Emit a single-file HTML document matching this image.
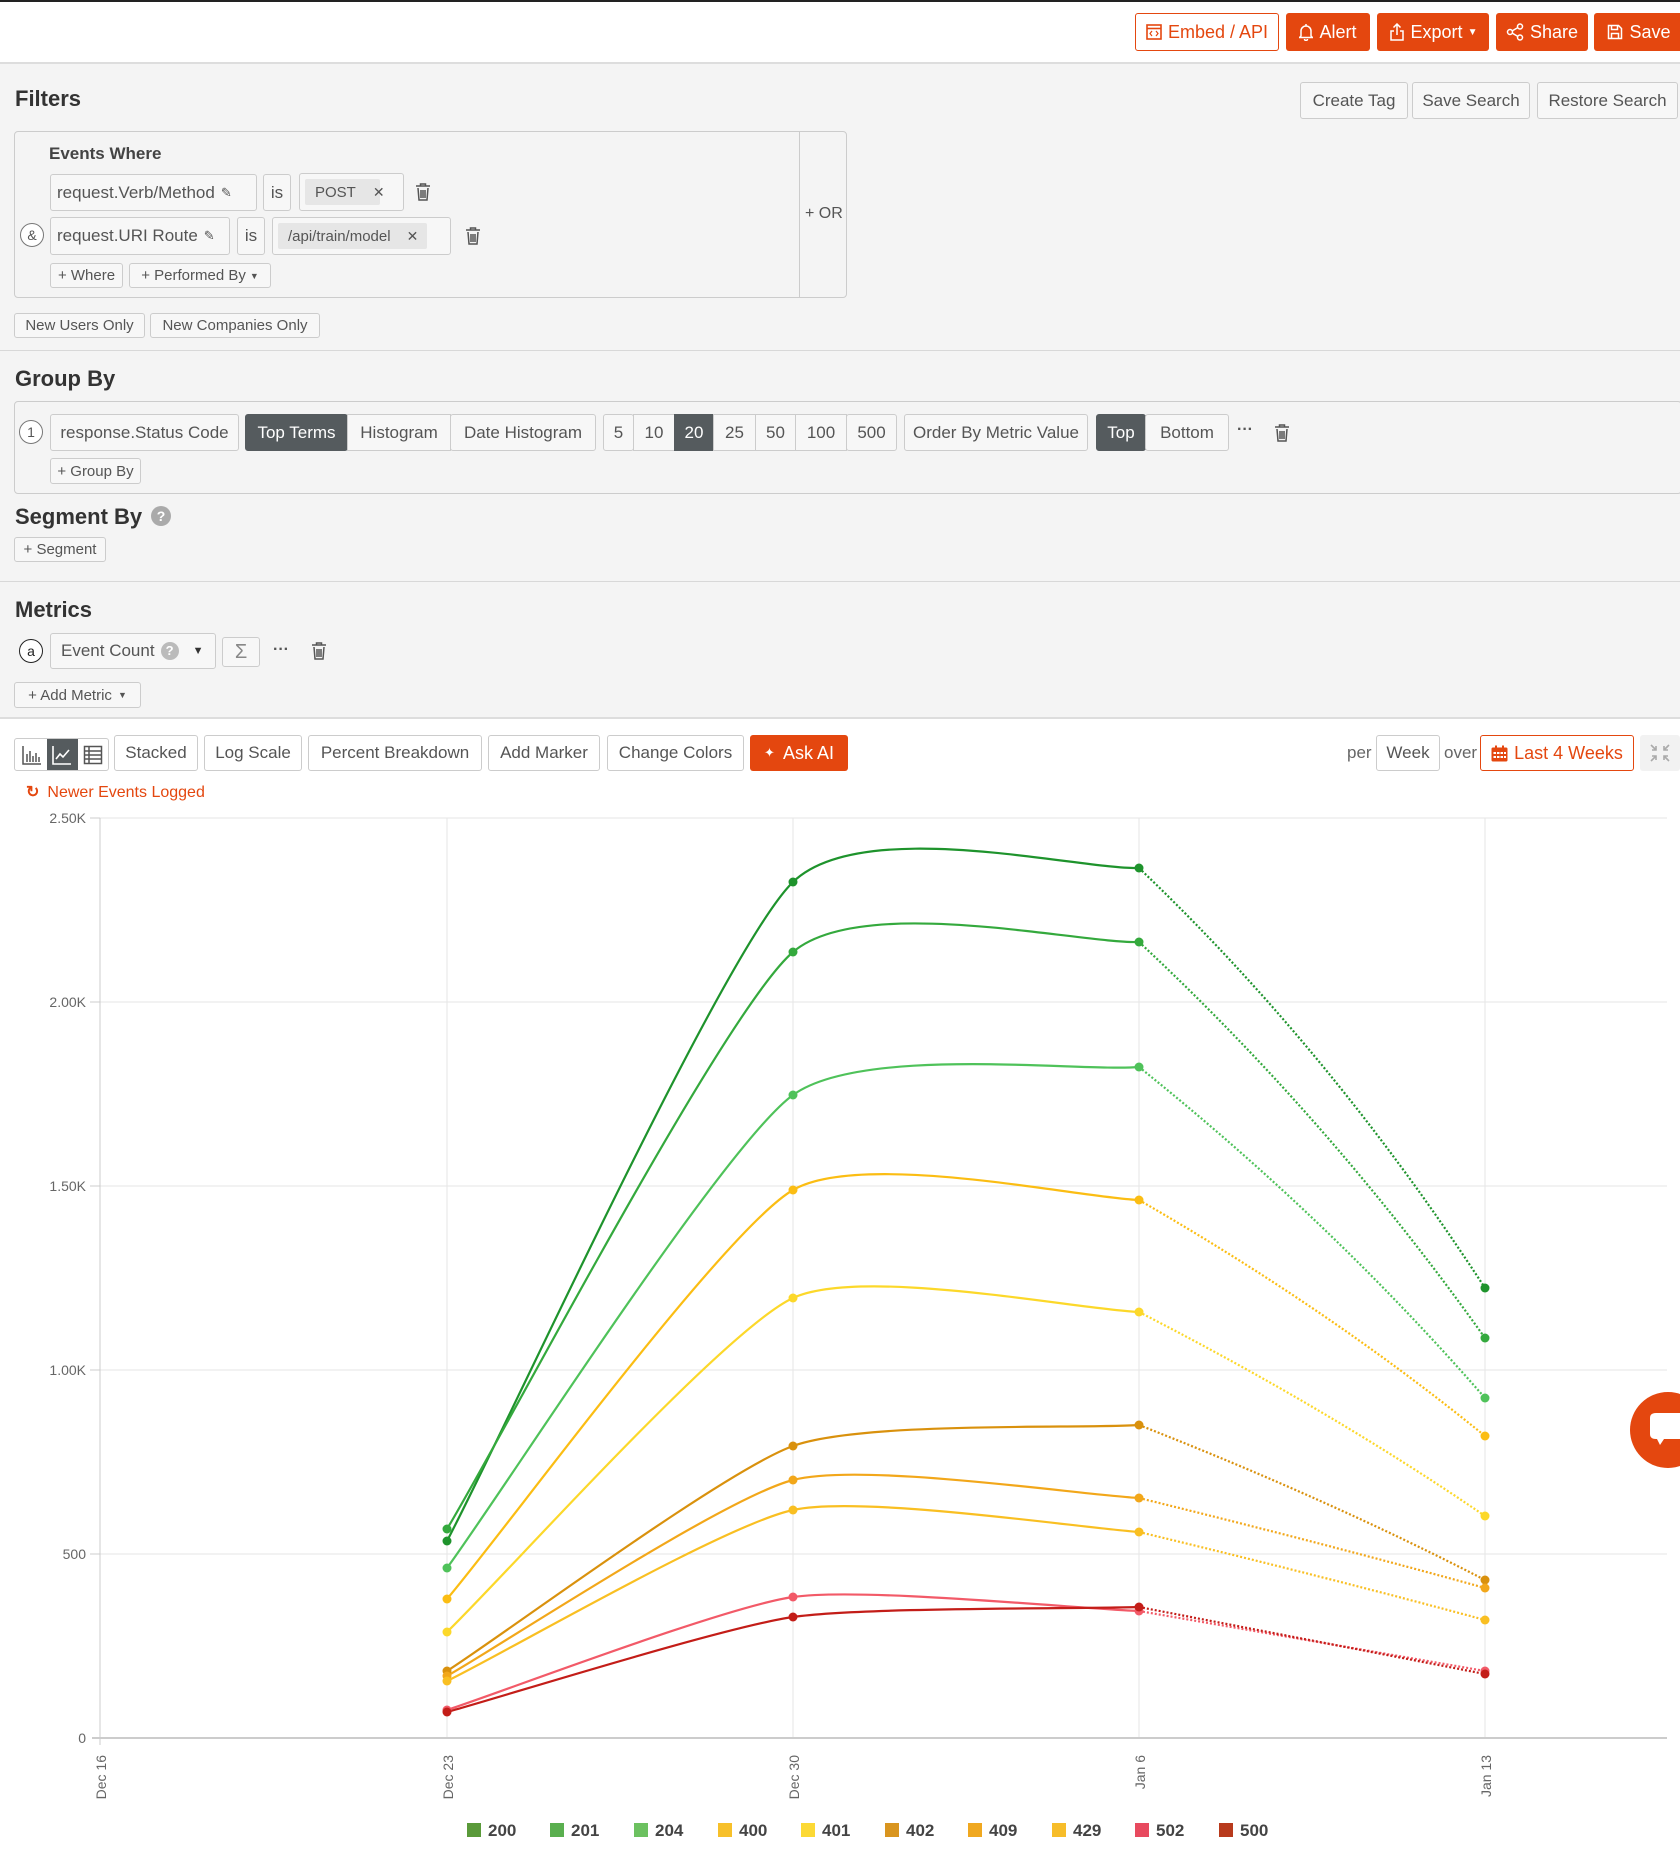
<!DOCTYPE html>
<html><head><meta charset="utf-8">
<style>
*{box-sizing:border-box;margin:0;padding:0}
body{width:1680px;height:1872px;position:relative;background:#fff;font-family:"Liberation Sans",Arial,sans-serif;color:#555;overflow:hidden;font-size:17px}
.a{position:absolute}
.b{position:absolute;border:1px solid #ccc;border-radius:3px;background:#f7f7f7;display:flex;align-items:center;justify-content:center;color:#555;white-space:nowrap}
.w{background:#fff}
.o{position:absolute;background:#e4470f;color:#fff;border-radius:3px;display:flex;align-items:center;justify-content:center;white-space:nowrap;font-size:18px}
.d{background:#555b5e!important;color:#fff!important;border-color:#555b5e!important}
.h{position:absolute;font-weight:bold;font-size:22px;color:#333}
.tag{position:absolute;background:#e6e6e6;border-radius:2px;display:flex;align-items:center;padding-left:10px;font-size:15px;color:#555}
.c{position:absolute;border:1px solid #777;border-radius:50%;width:24px;height:24px;display:flex;align-items:center;justify-content:center;font-size:14px;background:#fff}
.hr{position:absolute;left:0;width:1680px;height:2px;background:#ddd}
</style></head><body>
<div class="a" style="left:0;top:0;width:1680px;height:2px;background:#222"></div>
<div class="hr" style="top:62px"></div>
<div class="a" style="left:0;top:64px;width:1680px;height:654px;background:#f4f4f4"></div>
<div class="hr" style="top:717px"></div>

<!-- top buttons -->
<div class="b w" style="left:1135px;top:13px;width:144px;height:38px;border-color:#e4470f;color:#e4470f;font-size:18px">
<svg width="16" height="16" viewBox="0 0 16 16" style="margin-right:6px"><rect x="1" y="1" width="14" height="14" fill="none" stroke="#e4470f" stroke-width="1.6"/><line x1="1" y1="4.5" x2="15" y2="4.5" stroke="#e4470f" stroke-width="1.6"/><path d="M6 7l-2 2.5 2 2.5M10 7l2 2.5-2 2.5" stroke="#e4470f" fill="none" stroke-width="1.2"/></svg>Embed / API</div>
<div class="o" style="left:1286px;top:13px;width:84px;height:38px"><svg width="14" height="18" viewBox="0 0 14 18" style="margin-right:6px"><path d="M7 1v2M2 13V8a5 5 0 0 1 10 0v5l1.5 1.5h-13z M5.5 16a1.5 1.5 0 0 0 3 0" fill="none" stroke="#fff" stroke-width="1.5"/></svg>Alert</div>
<div class="o" style="left:1377px;top:13px;width:112px;height:38px"><svg width="16" height="18" viewBox="0 0 16 18" style="margin-right:6px"><path d="M8 1v11M4.5 4.5 8 1l3.5 3.5M5 8H2v9h12V8h-3" fill="none" stroke="#fff" stroke-width="1.5"/></svg>Export <span style="font-size:10px;margin-left:5px">&#9660;</span></div>
<div class="o" style="left:1496px;top:13px;width:92px;height:38px"><svg width="18" height="18" viewBox="0 0 18 18" style="margin-right:6px"><circle cx="4" cy="9" r="2.5" fill="none" stroke="#fff" stroke-width="1.5"/><circle cx="14" cy="3.5" r="2.5" fill="none" stroke="#fff" stroke-width="1.5"/><circle cx="14" cy="14.5" r="2.5" fill="none" stroke="#fff" stroke-width="1.5"/><path d="M6 8l6-3.5M6 10l6 3.5" stroke="#fff" stroke-width="1.5"/></svg>Share</div>
<div class="o" style="left:1594px;top:13px;width:90px;height:38px"><svg width="16" height="16" viewBox="0 0 16 16" style="margin-right:6px"><path d="M1.5 1.5h10l3 3v10h-13z M4.5 1.5v4h6v-4 M4.5 14.5v-5h7v5" fill="none" stroke="#fff" stroke-width="1.5"/></svg>Save</div>

<!-- Filters -->
<div class="h" style="left:15px;top:86px">Filters</div>
<div class="b" style="left:1300px;top:82px;width:108px;height:37px">Create Tag</div>
<div class="b" style="left:1412px;top:82px;width:118px;height:37px">Save Search</div>
<div class="b" style="left:1537px;top:82px;width:141px;height:37px">Restore Search</div>

<div class="a" style="left:14px;top:131px;width:833px;height:167px;border:1px solid #ccc;border-radius:4px"></div>
<div class="a" style="left:799px;top:131px;width:1px;height:167px;background:#ccc"></div>
<div class="a" style="left:805px;top:205px;font-size:16px">+ OR</div>
<div class="a" style="left:49px;top:144px;font-weight:bold;font-size:17px;color:#444">Events Where</div>

<div class="b" style="left:50px;top:174px;width:207px;height:37px;justify-content:flex-start;padding-left:6px">request.Verb/Method <span style="font-size:13px;margin-left:6px">&#9998;</span></div>
<div class="b" style="left:263px;top:174px;width:28px;height:37px">is</div>
<div class="b" style="left:299px;top:173px;width:105px;height:38px"></div>
<div class="tag" style="left:305px;top:179px;width:75px;height:26px">POST <span style="margin-left:17px;font-size:14px">&#x2715;</span></div>
<svg class="a" style="left:415px;top:183px" width="16" height="18" viewBox="0 0 16 18"><path d="M1 3h14M5.5 3V1h5v2M3 5l1 12h8l1-12M6 7v8M8 7v8M10 7v8" fill="none" stroke="#555" stroke-width="1.5"/></svg>

<div class="c" style="left:20px;top:223px">&amp;</div>
<div class="b" style="left:50px;top:217px;width:180px;height:38px;justify-content:flex-start;padding-left:6px">request.URI Route <span style="font-size:13px;margin-left:6px">&#9998;</span></div>
<div class="b" style="left:237px;top:217px;width:28px;height:38px">is</div>
<div class="b" style="left:272px;top:217px;width:179px;height:38px"></div>
<div class="tag" style="left:278px;top:223px;width:149px;height:26px">/api/train/model <span style="margin-left:16px;font-size:14px">&#x2715;</span></div>
<svg class="a" style="left:465px;top:227px" width="16" height="18" viewBox="0 0 16 18"><path d="M1 3h14M5.5 3V1h5v2M3 5l1 12h8l1-12M6 7v8M8 7v8M10 7v8" fill="none" stroke="#555" stroke-width="1.5"/></svg>

<div class="b" style="left:50px;top:263px;width:73px;height:25px;font-size:15px">+ Where</div>
<div class="b" style="left:129px;top:263px;width:142px;height:25px;font-size:15px">+ Performed By <span style="font-size:9px;margin-left:4px">&#9660;</span></div>

<div class="b" style="left:14px;top:313px;width:131px;height:25px;font-size:15px">New Users Only</div>
<div class="b" style="left:150px;top:313px;width:170px;height:25px;font-size:15px">New Companies Only</div>
<div class="hr" style="top:350px;height:1px;background:#d8d8d8"></div>

<!-- Group By -->
<div class="h" style="left:15px;top:366px">Group By</div>
<div class="a" style="left:14px;top:401px;width:1668px;height:93px;border:1px solid #ccc;border-radius:4px"></div>
<div class="c" style="left:19px;top:420px">1</div>
<div class="b" style="left:50px;top:414px;width:189px;height:37px">response.Status Code</div>
<div class="b d" style="left:245px;top:414px;width:103px;height:37px">Top Terms</div>
<div class="b" style="left:347px;top:414px;width:104px;height:37px;border-radius:0">Histogram</div>
<div class="b" style="left:450px;top:414px;width:146px;height:37px">Date Histogram</div>
<div class="b" style="left:603px;top:414px;width:31px;height:37px">5</div>
<div class="b" style="left:633px;top:414px;width:42px;height:37px;border-radius:0">10</div>
<div class="b d" style="left:674px;top:414px;width:40px;height:37px;border-radius:0">20</div>
<div class="b" style="left:713px;top:414px;width:43px;height:37px;border-radius:0">25</div>
<div class="b" style="left:755px;top:414px;width:41px;height:37px;border-radius:0">50</div>
<div class="b" style="left:795px;top:414px;width:52px;height:37px;border-radius:0">100</div>
<div class="b" style="left:846px;top:414px;width:51px;height:37px">500</div>
<div class="b" style="left:904px;top:414px;width:184px;height:37px">Order By Metric Value</div>
<div class="b d" style="left:1096px;top:414px;width:50px;height:37px">Top</div>
<div class="b" style="left:1145px;top:414px;width:84px;height:37px">Bottom</div>
<div class="a" style="left:1237px;top:421px;font-size:16px;font-weight:bold">&middot;&middot;&middot;</div>
<svg class="a" style="left:1274px;top:424px" width="16" height="18" viewBox="0 0 16 18"><path d="M1 3h14M5.5 3V1h5v2M3 5l1 12h8l1-12M6 7v8M8 7v8M10 7v8" fill="none" stroke="#555" stroke-width="1.5"/></svg>
<div class="b" style="left:50px;top:458px;width:91px;height:26px;font-size:15px">+ Group By</div>

<!-- Segment -->
<div class="h" style="left:15px;top:504px">Segment By</div>
<div class="a" style="left:151px;top:506px;width:20px;height:20px;border-radius:50%;background:#aaa;color:#fff;font-size:14px;font-weight:bold;text-align:center;line-height:20px">?</div>
<div class="b" style="left:14px;top:537px;width:92px;height:25px;font-size:15px">+ Segment</div>
<div class="hr" style="top:581px;height:1px;background:#d8d8d8"></div>

<!-- Metrics -->
<div class="h" style="left:15px;top:597px">Metrics</div>
<div class="c" style="left:19px;top:639px;border-color:#222;color:#222">a</div>
<div class="b" style="left:50px;top:633px;width:166px;height:36px;justify-content:flex-start;padding-left:10px">Event Count <span style="display:inline-block;width:18px;height:18px;border-radius:50%;background:#bbb;color:#fff;font-size:13px;text-align:center;line-height:18px;margin-left:6px;font-weight:bold">?</span><span style="font-size:11px;margin-left:14px;color:#333">&#9660;</span></div>
<div class="b" style="left:222px;top:637px;width:38px;height:30px;font-size:20px;color:#888">&Sigma;</div>
<div class="a" style="left:273px;top:641px;font-size:16px;font-weight:bold">&middot;&middot;&middot;</div>
<svg class="a" style="left:311px;top:642px" width="16" height="18" viewBox="0 0 16 18"><path d="M1 3h14M5.5 3V1h5v2M3 5l1 12h8l1-12M6 7v8M8 7v8M10 7v8" fill="none" stroke="#555" stroke-width="1.5"/></svg>
<div class="b" style="left:14px;top:682px;width:127px;height:26px;font-size:15px">+ Add Metric <span style="font-size:9px;margin-left:6px">&#9660;</span></div>

<!-- toolbar -->
<div class="b w" style="left:14px;top:738px;width:95px;height:33px"></div>
<svg class="a" style="left:22px;top:745px" width="20" height="20" viewBox="0 0 20 20"><path d="M1 1v18h18M5 17V9M8 17V6M11 17V11M14 17V8M17 17V12" stroke="#555" stroke-width="1.5" fill="none"/></svg>
<div class="a" style="left:47px;top:739px;width:31px;height:31px;background:#555b5e"></div>
<svg class="a" style="left:52px;top:745px" width="20" height="20" viewBox="0 0 20 20"><path d="M1 1v18h18M4 14l4-5 3 3 6-7" stroke="#fff" stroke-width="1.6" fill="none"/></svg>
<svg class="a" style="left:83px;top:745px" width="20" height="20" viewBox="0 0 20 20"><rect x="1.5" y="1.5" width="17" height="17" fill="none" stroke="#555" stroke-width="1.5"/><path d="M1.5 6h17M1.5 10h17M1.5 14h17M6 1.5v17" stroke="#555" stroke-width="1.5"/></svg>
<div class="b w" style="left:114px;top:735px;width:84px;height:36px">Stacked</div>
<div class="b w" style="left:204px;top:735px;width:98px;height:36px">Log Scale</div>
<div class="b w" style="left:308px;top:735px;width:174px;height:36px">Percent Breakdown</div>
<div class="b w" style="left:488px;top:735px;width:112px;height:36px">Add Marker</div>
<div class="b w" style="left:607px;top:735px;width:137px;height:36px">Change Colors</div>
<div class="o" style="left:750px;top:735px;width:98px;height:36px"><span style="font-size:13px;margin-right:8px">&#10022;</span>Ask AI</div>

<div class="a" style="left:1347px;top:743px;color:#666">per</div>
<div class="b w" style="left:1376px;top:735px;width:64px;height:36px">Week</div>
<div class="a" style="left:1444px;top:743px;color:#666">over</div>
<div class="b w" style="left:1480px;top:735px;width:154px;height:36px;border-color:#e4470f;color:#e4470f;font-size:18px">
<svg width="17" height="17" viewBox="0 0 17 17" style="margin-right:6px"><rect x="0.5" y="2.5" width="16" height="14" rx="1.5" fill="#e4470f"/><rect x="4" y="0.5" width="2" height="4" fill="#e4470f"/><rect x="11" y="0.5" width="2" height="4" fill="#e4470f"/><g fill="#fff"><rect x="2.5" y="7" width="2.5" height="2"/><rect x="6" y="7" width="2.5" height="2"/><rect x="9.5" y="7" width="2.5" height="2"/><rect x="13" y="7" width="2" height="2"/><rect x="2.5" y="11" width="2.5" height="2"/><rect x="6" y="11" width="2.5" height="2"/><rect x="9.5" y="11" width="2.5" height="2"/><rect x="13" y="11" width="2" height="2"/></g></svg>Last 4 Weeks</div>
<div class="a" style="left:1640px;top:735px;width:40px;height:36px;background:#f2f2f2;border-radius:3px"></div>
<svg class="a" style="left:1650px;top:744px" width="20" height="18" viewBox="0 0 20 18"><path d="M1 1l5 5M6 2v4H2M19 1l-5 5M14 2v4h4M1 17l5-5M6 16v-4H2M19 17l-5-5M14 16v-4h4" stroke="#aaa" stroke-width="1.6" fill="none"/></svg>

<div class="a" style="left:26px;top:782px;color:#e4470f;font-size:16px"><span style="font-weight:bold;margin-right:8px">&#x21BB;</span>Newer Events Logged</div>

<!-- chart -->
<svg class="a" style="left:0;top:0" width="1680" height="1872">
<g stroke="#e5e5e5" stroke-width="1">
<line x1="100" y1="818" x2="1667" y2="818"/><line x1="100" y1="1002" x2="1667" y2="1002"/><line x1="100" y1="1186" x2="1667" y2="1186"/><line x1="100" y1="1370" x2="1667" y2="1370"/><line x1="100" y1="1554" x2="1667" y2="1554"/>
<line x1="447" y1="818" x2="447" y2="1738"/><line x1="793" y1="818" x2="793" y2="1738"/><line x1="1139" y1="818" x2="1139" y2="1738"/><line x1="1485" y1="818" x2="1485" y2="1738"/>
</g>
<g stroke="#ccc"><line x1="100" y1="818" x2="100" y2="1745"/><line x1="90" y1="818" x2="100" y2="818"/><line x1="90" y1="1002" x2="100" y2="1002"/><line x1="90" y1="1186" x2="100" y2="1186"/><line x1="90" y1="1370" x2="100" y2="1370"/><line x1="90" y1="1554" x2="100" y2="1554"/></g>
<line x1="92" y1="1738" x2="1667" y2="1738" stroke="#ccc" stroke-width="2"/>
<g font-family="Liberation Sans,Arial,sans-serif" font-size="14" fill="#666" text-anchor="end">
<text x="86" y="823">2.50K</text><text x="86" y="1007">2.00K</text><text x="86" y="1191">1.50K</text><text x="86" y="1375">1.00K</text><text x="86" y="1559">500</text><text x="86" y="1743">0</text>
<text transform="translate(106,1755) rotate(-90)">Dec 16</text>
<text transform="translate(453,1755) rotate(-90)">Dec 23</text>
<text transform="translate(799,1755) rotate(-90)">Dec 30</text>
<text transform="translate(1145,1755) rotate(-90)">Jan 6</text>
<text transform="translate(1491,1755) rotate(-90)">Jan 13</text>
</g>
<g fill="none" stroke-width="2.2">
<path stroke="#1e932c" d="M447 1541C505 1431 724 949 793 882C862 815 1081 870 1139 868"/>
<path stroke="#34a93d" d="M447 1529C505 1433 724 1011 793 952C862 893 1081 944 1139 942"/>
<path stroke="#4fc25a" d="M447 1568C505 1489 724 1145 793 1095C862 1045 1081 1072 1139 1067"/>
<path stroke="#fbbd13" d="M447 1599C505 1531 724 1230 793 1190C862 1150 1081 1198 1139 1200"/>
<path stroke="#fcd82a" d="M447 1632C505 1576 724 1330 793 1298C862 1266 1081 1310 1139 1312"/>
<path stroke="#d9910d" d="M447 1671C505 1634 724 1471 793 1446C862 1421 1081 1429 1139 1425"/>
<path stroke="#f2a71a" d="M447 1676C505 1643 724 1498 793 1480C862 1462 1081 1495 1139 1498"/>
<path stroke="#f9bf22" d="M447 1681C505 1653 724 1525 793 1510C862 1495 1081 1528 1139 1532"/>
<path stroke="#f25a68" d="M447 1710C505 1691 724 1607 793 1597C862 1587 1081 1609 1139 1611"/>
<path stroke="#c31d18" d="M447 1712C505 1696 724 1627 793 1617C862 1607 1081 1609 1139 1607"/>
</g>
<g fill="none" stroke-width="2.2" stroke-dasharray="2 2">
<path stroke="#1e932c" d="M1139 868Q1330 1050 1485 1288"/>
<path stroke="#34a93d" d="M1139 942Q1330 1120 1485 1338"/>
<path stroke="#4fc25a" d="M1139 1067Q1330 1220 1485 1398"/>
<path stroke="#fbbd13" d="M1139 1200Q1330 1310 1485 1436"/>
<path stroke="#fcd82a" d="M1139 1312Q1330 1410 1485 1516"/>
<path stroke="#d9910d" d="M1139 1425Q1330 1500 1485 1580"/>
<path stroke="#f2a71a" d="M1139 1498Q1330 1545 1485 1588"/>
<path stroke="#f9bf22" d="M1139 1532Q1330 1578 1485 1620"/>
<path stroke="#f25a68" d="M1139 1611L1485 1671"/>
<path stroke="#c31d18" d="M1139 1607L1485 1674"/>
</g>
<g>
<g fill="#1e932c"><circle cx="447" cy="1541" r="4.5"/><circle cx="793" cy="882" r="4.5"/><circle cx="1139" cy="868" r="4.5"/><circle cx="1485" cy="1288" r="4.5"/></g>
<g fill="#34a93d"><circle cx="447" cy="1529" r="4.5"/><circle cx="793" cy="952" r="4.5"/><circle cx="1139" cy="942" r="4.5"/><circle cx="1485" cy="1338" r="4.5"/></g>
<g fill="#4fc25a"><circle cx="447" cy="1568" r="4.5"/><circle cx="793" cy="1095" r="4.5"/><circle cx="1139" cy="1067" r="4.5"/><circle cx="1485" cy="1398" r="4.5"/></g>
<g fill="#fbbd13"><circle cx="447" cy="1599" r="4.5"/><circle cx="793" cy="1190" r="4.5"/><circle cx="1139" cy="1200" r="4.5"/><circle cx="1485" cy="1436" r="4.5"/></g>
<g fill="#fcd82a"><circle cx="447" cy="1632" r="4.5"/><circle cx="793" cy="1298" r="4.5"/><circle cx="1139" cy="1312" r="4.5"/><circle cx="1485" cy="1516" r="4.5"/></g>
<g fill="#d9910d"><circle cx="447" cy="1671" r="4.5"/><circle cx="793" cy="1446" r="4.5"/><circle cx="1139" cy="1425" r="4.5"/><circle cx="1485" cy="1580" r="4.5"/></g>
<g fill="#f2a71a"><circle cx="447" cy="1676" r="4.5"/><circle cx="793" cy="1480" r="4.5"/><circle cx="1139" cy="1498" r="4.5"/><circle cx="1485" cy="1588" r="4.5"/></g>
<g fill="#f9bf22"><circle cx="447" cy="1681" r="4.5"/><circle cx="793" cy="1510" r="4.5"/><circle cx="1139" cy="1532" r="4.5"/><circle cx="1485" cy="1620" r="4.5"/></g>
<g fill="#f25a68"><circle cx="447" cy="1710" r="4.5"/><circle cx="793" cy="1597" r="4.5"/><circle cx="1139" cy="1611" r="4.5"/><circle cx="1485" cy="1671" r="4.5"/></g>
<g fill="#c31d18"><circle cx="447" cy="1712" r="4.5"/><circle cx="793" cy="1617" r="4.5"/><circle cx="1139" cy="1607" r="4.5"/><circle cx="1485" cy="1674" r="4.5"/></g>
</g>
<g font-family="Liberation Sans,Arial,sans-serif" font-size="17" font-weight="bold" fill="#444">
<rect x="467" y="1823" width="14" height="14" fill="#5a9a3a"/><text x="488" y="1836">200</text>
<rect x="550" y="1823" width="14" height="14" fill="#5aaf4f"/><text x="571" y="1836">201</text>
<rect x="634" y="1823" width="14" height="14" fill="#6cc160"/><text x="655" y="1836">204</text>
<rect x="718" y="1823" width="14" height="14" fill="#f7c02a"/><text x="739" y="1836">400</text>
<rect x="801" y="1823" width="14" height="14" fill="#fcd935"/><text x="822" y="1836">401</text>
<rect x="885" y="1823" width="14" height="14" fill="#d9951f"/><text x="906" y="1836">402</text>
<rect x="968" y="1823" width="14" height="14" fill="#f0a820"/><text x="989" y="1836">409</text>
<rect x="1052" y="1823" width="14" height="14" fill="#f7bd2a"/><text x="1073" y="1836">429</text>
<rect x="1135" y="1823" width="14" height="14" fill="#e84a5f"/><text x="1156" y="1836">502</text>
<rect x="1219" y="1823" width="14" height="14" fill="#b83a1c"/><text x="1240" y="1836">500</text>
</g>
<circle cx="1668" cy="1430" r="38" fill="#e4470f"/>
<path d="M1650 1418q0-5 6-5h24v26h-16l-4 6-3-6h-1q-6 0-6-5z" fill="#fff"/>
</svg>
</body></html>
